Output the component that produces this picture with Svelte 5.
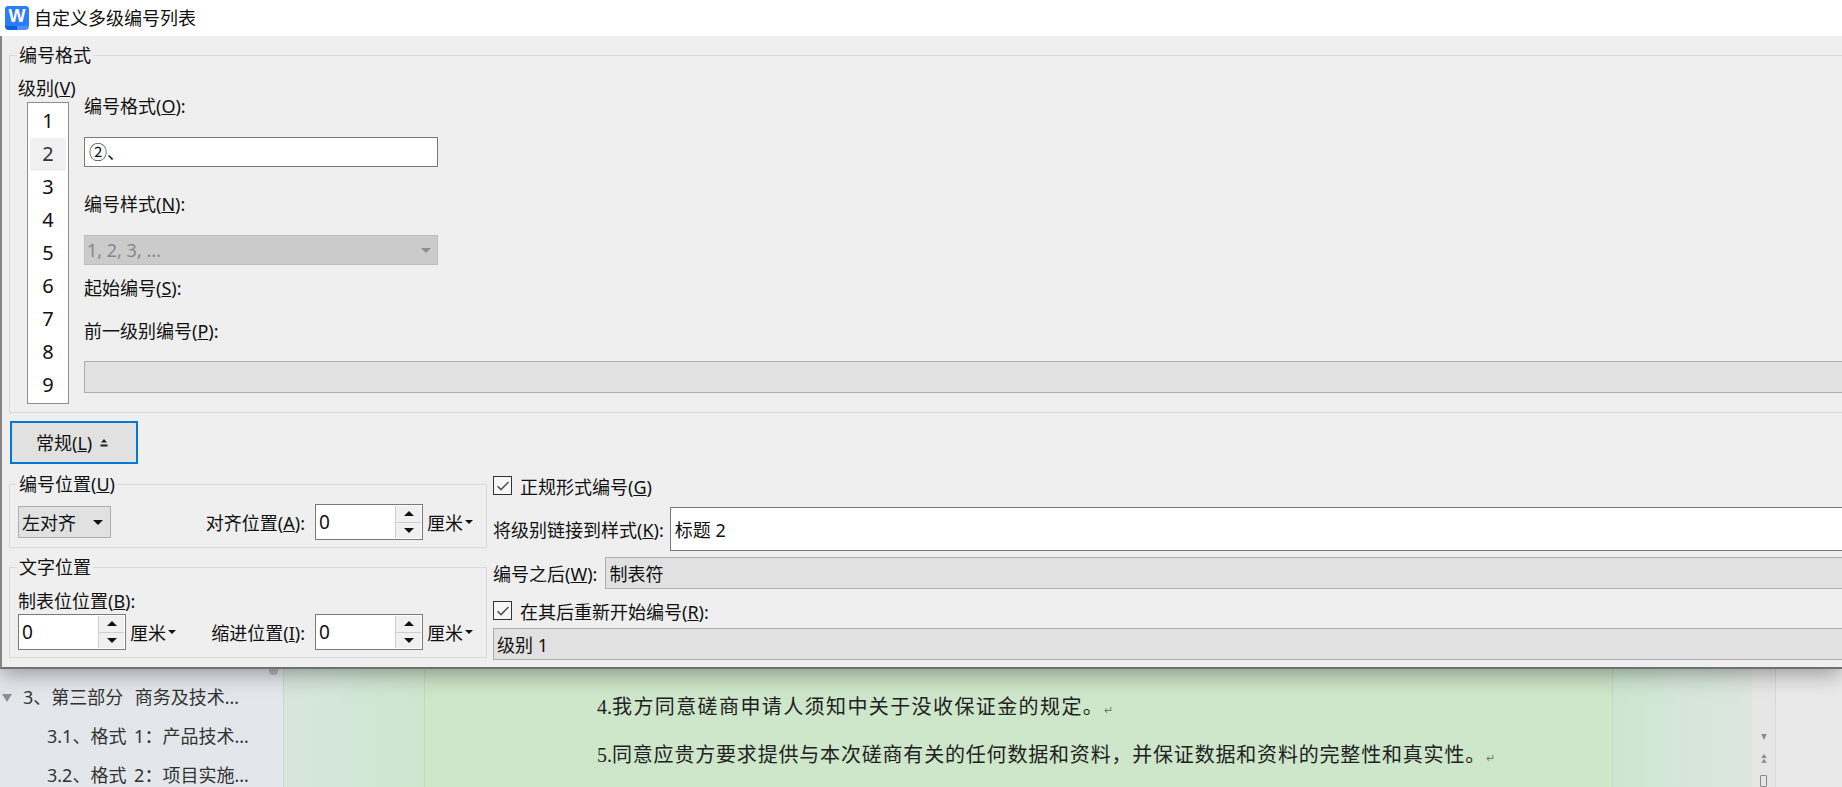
<script>
  const levels = [1, 2, 3, 4, 5, 6, 7, 8, 9];
</script>

{#snippet spinner()}
  <div class="spinner">
    <span class="spin-value">0</span>
    <div class="spin-btns">
      <div class="spin-btn"><i class="tri up"></i></div>
      <div class="spin-btn"><i class="tri down"></i></div>
    </div>
  </div>
  <span class="unit">厘米<i class="tri down small"></i></span>
{/snippet}

{#snippet check()}
  <span class="checkbox">
    <svg width="14" height="12" viewBox="0 0 14 12"><path d="M1.5 6.2 L5 9.6 L12.5 2" fill="none" stroke="#555" stroke-width="1.6" /></svg>
  </span>
{/snippet}

<div class="screen">
  <div class="dialog">
    <div class="titlebar">
      <div class="logo"><span>W</span></div>
      <span class="title">自定义多级编号列表</span>
    </div>

    <div class="body">
      <fieldset class="group format">
        <legend>编号格式</legend>
        <div class="format-cols">
          <div class="level-col">
            <div class="label">级别(<u>V</u>)</div>
            <div class="listbox">
              {#each levels as n}
                <div class="level" class:active={n === 2}>{n}</div>
              {/each}
            </div>
          </div>
          <div class="format-col">
            <div class="label">编号格式(<u>O</u>):</div>
            <div class="field format-input">②、</div>
            <div class="label style-label">编号样式(<u>N</u>):</div>
            <div class="field disabled">1, 2, 3, ...<i class="tri down gray"></i></div>
            <div class="label start-label">起始编号(<u>S</u>):</div>
            <div class="label prev-label">前一级别编号(<u>P</u>):</div>
            <div class="graybox prev-box"></div>
          </div>
        </div>
      </fieldset>

      <button class="general">
        <span>常规(<u>L</u>)</span>
        <svg width="8" height="8" viewBox="0 0 8 8"><path d="M4 0 L7 3.5 H1 Z M0.5 5.5 H7.5 V7.5 H0.5 Z" fill="#222" /></svg>
      </button>

      <div class="lower">
        <div class="lower-left">
          <fieldset class="group">
            <legend>编号位置(<u>U</u>)</legend>
            <div class="row num-row">
              <div class="align-select">左对齐<i class="tri down"></i></div>
              <span class="label row-label">对齐位置(<u>A</u>):</span>
              {@render spinner()}
            </div>
          </fieldset>
          <fieldset class="group text-pos">
            <legend>文字位置</legend>
            <div class="label tab-label">制表位位置(<u>B</u>):</div>
            <div class="row">
              {@render spinner()}
              <span class="label row-label">缩进位置(<u>I</u>):</span>
              {@render spinner()}
            </div>
          </fieldset>
        </div>

        <div class="lower-right">
          <div class="check-row first">{@render check()}<span class="label">正规形式编号(<u>G</u>)</span></div>
          <div class="link-row">
            <span class="label">将级别链接到样式(<u>K</u>):</span>
            <div class="field link-field">标题 2</div>
          </div>
          <div class="after-row">
            <span class="label">编号之后(<u>W</u>):</span>
            <div class="graybox">制表符</div>
          </div>
          <div class="check-row second">{@render check()}<span class="label">在其后重新开始编号(<u>R</u>):</span></div>
          <div class="graybox restart">级别 1</div>
        </div>
      </div>
    </div>
  </div>

  <div class="behind">
    <aside class="outline">
      <div class="thumb"></div>
      <div class="node top"><i class="tri down gray"></i>3、第三部分 &nbsp;商务及技术…</div>
      <div class="node">3.1、格式 1：产品技术…</div>
      <div class="node">3.2、格式 2：项目实施…</div>
    </aside>
    <div class="margin-left"></div>
    <main class="page">
      <p class="loose"><span class="num">4. </span>我方同意磋商申请人须知中关于没收保证金的规定。<span class="ret">↵</span></p>
      <p><span class="num">5. </span>同意应贵方要求提供与本次磋商有关的任何数据和资料，并保证数据和资料的完整性和真实性。<span class="ret">↵</span></p>
    </main>
    <div class="margin-right"></div>
    <div class="vscroll">
      <svg width="10" height="9" viewBox="0 0 10 9"><path d="M1 0 H9 L5 9 Z" fill="#8a8a8a" /></svg>
      <svg class="dbl" width="10" height="13" viewBox="0 0 10 13"><path d="M5 0 L9 6 H1 Z M5 7 L9 13 H1 Z" fill="#8a8a8a" /></svg>
      <span class="page-icon"></span>
    </div>
    <div class="rest"></div>
  </div>
</div>

<style>
  :global(body) { margin: 0; overflow: hidden; }
  .screen {
    width: 1842px; height: 787px; overflow: hidden;
    display: flex; flex-direction: column;
    font-family: "Noto Sans", "Noto Sans CJK SC", sans-serif;
    font-size: 18px; line-height: 24px; color: #111;
  }
  .dialog {
    position: relative; z-index: 2;
    height: 669px; flex: none;
    display: flex; flex-direction: column;
    box-shadow: 0 3px 22px rgba(0, 0, 0, 0.4);
  }
  .titlebar {
    height: 36px; flex: none; background: #fff;
    display: flex; align-items: center; gap: 5px; padding-left: 5px;
  }
  .logo {
    width: 24px; height: 24px; border-radius: 4px; overflow: hidden;
    background: linear-gradient(90deg, #0a5fe0 0 50%, #4e90f5 50%);
  }
  .logo span {
    display: block; height: 20px; text-align: center;
    background: #2b7cf7; border-radius: 0 0 2px 2px; color: #fff;
    font: bold 18px/20px "Liberation Sans", sans-serif;
  }
  .title { font-size: 18px; }

  .body {
    flex: 1; min-height: 0; background: #efefef;
    border-left: 2px solid #858585; border-bottom: 2px solid #707070;
    padding-top: 7px; overflow: hidden;
  }
  .group {
    margin: 0; padding: 0; min-width: 0;
    border: 1px solid #dadada;
  }
  .group legend {
    margin-left: 7px; padding: 0 2px; line-height: 24px; font-size: 18px;
  }
  .format { margin-left: 7px; border-right: none; padding-bottom: 8px; }
  .format-cols { display: flex; padding-top: 9px; }
  .level-col { width: 74px; flex: none; padding-left: 8px; box-sizing: border-box; }
  .label { white-space: nowrap; }
  .listbox {
    margin: 2px 0 0 9px; width: 42px; height: 302px; box-sizing: border-box;
    border: 1px solid #8a8e92; background: #fff; padding: 2px;
    text-align: center;
  }
  .level { height: 33px; line-height: 31px; font-size: 20px; }
  .level.active { background: #f0f0f0; color: #333; }

  .format-col { flex: 1; padding-top: 18px; min-width: 0; }
  .field {
    box-sizing: border-box; border: 1px solid #7a7a7a; background: #fff;
    height: 30px; line-height: 28px; padding-left: 4px;
    white-space: nowrap; position: relative;
  }
  .format-input { width: 354px; margin-top: 19px; }
  .style-label { margin-top: 25px; }
  .disabled {
    width: 354px; margin-top: 19px; background: #cbcbcb; border-color: #bdbdbd;
    color: #878787; padding-left: 2px;
  }
  .disabled .tri { position: absolute; right: 6px; top: 12px; }
  .start-label { margin-top: 11px; }
  .prev-label { margin-top: 19px; }
  .graybox {
    box-sizing: border-box; background: #e1e1e1; border: 1px solid #adadad; border-right: none;
    height: 32px; line-height: 32px; padding-left: 3px; flex: 1;
  }
  .prev-box { margin-top: 18px; }

  .general {
    display: flex; align-items: center; gap: 8px;
    width: 128px; height: 43px; margin: 8px 0 8px 8px; padding: 0 0 0 24px;
    box-sizing: border-box; border: 2px solid #0078d7; background: #e1e1e1;
    font: inherit; color: inherit;
  }

  .lower { display: flex; gap: 6px; margin-left: 7px; }
  .lower-left { width: 478px; flex: none; }
  .num-row { padding: 8px 11px 7px 8px; }
  .row { display: flex; align-items: center; padding-left: 8px; padding-right: 11px; }
  .text-pos { margin-top: 7px; padding-bottom: 7px; }
  .tab-label { padding: 10px 0 1px 8px; }
  .row-label { margin-left: auto; margin-right: 10px; padding-top: 2px; }
  .align-select {
    box-sizing: border-box; width: 93px; height: 32px; line-height: 32px; padding-left: 3px;
    background: #e1e1e1; border: 1px solid #adadad; position: relative;
  }
  .align-select .tri { position: absolute; right: 7px; top: 13px; }

  .spinner {
    box-sizing: border-box; width: 108px; height: 36px; flex: none;
    border: 1px solid #7a7a7a; background: #fff; display: flex;
  }
  .spin-value { flex: 1; line-height: 34px; padding-left: 3px; font-size: 19px; }
  .spin-btns {
    width: 26px; margin: 1px 1px 1px 0; display: flex; flex-direction: column; gap: 1px;
    background: #cfcfcf; border-left: 1px solid #cfcfcf; box-sizing: border-box;
  }
  .spin-btn { flex: 1; background: #f0f0f0; display: flex; align-items: center; justify-content: center; }
  .unit { margin-left: 4px; width: 48px; flex: none; white-space: nowrap; display: flex; align-items: center; gap: 2px; padding-top: 2px; }

  .tri { display: inline-block; width: 0; height: 0; border-left: 5px solid transparent; border-right: 5px solid transparent; }
  .tri.down { border-top: 5px solid #111; }
  .tri.up { border-bottom: 5px solid #111; }
  .tri.small { border-left-width: 4px; border-right-width: 4px; border-top-width: 4px; margin-top: -2px; }
  .tri.gray { border-top-color: #8f8f8f; }

  .lower-right { flex: 1; min-width: 0; }
  .lower-right .label { padding-top: 2px; }
  .check-row { display: flex; align-items: center; gap: 8px; height: 19px; }
  .check-row.first { margin-top: 4px; }
  .check-row.second { margin-top: 12px; }
  .checkbox {
    box-sizing: border-box; width: 19px; height: 19px; flex: none;
    border: 1px solid #333; background: #f7f7f7;
    display: flex; align-items: center; justify-content: center;
  }
  .link-row { display: flex; align-items: center; gap: 6px; margin-top: 12px; }
  .link-field { flex: 1; height: 44px; line-height: 44px; border-right: none; }
  .after-row { display: flex; align-items: center; gap: 8px; margin-top: 6px; }
  .restart { margin-top: 8px; flex: none; }

  .behind { flex: 1; min-height: 0; display: flex; }
  .outline {
    position: relative; width: 283px; flex: none; padding-top: 9px;
    background: #e3e7ec; border-right: 1px solid #d0d3d6;
    color: #333;
  }
  .thumb {
    position: absolute; left: 269px; top: -8px; width: 9px; height: 14px;
    border-radius: 4px; background: #b7bcc2;
  }
  .node { height: 39px; line-height: 39px; padding-left: 47px; white-space: nowrap; word-spacing: 3px; }
  .node.top { padding-left: 2px; display: flex; align-items: center; word-spacing: 1px; }
  .node.top .tri { border-left-width: 5px; border-right-width: 5px; border-top-width: 8px; margin-right: 11px; }
  .margin-left { width: 140px; flex: none; background: linear-gradient(90deg, #d6e6dd, #cee6cd); }
  .page {
    width: 1189px; flex: none; box-sizing: border-box; padding: 14px 0 0 172px;
    background: #cee6ca; border-left: 1px solid #c2d8bf; border-right: 1px solid #c2d8bf;
    font-size: 20px; letter-spacing: 0.81px; color: #222;
    white-space: nowrap;
  }
  .page p { margin: 0; height: 48px; line-height: 48px; }
  .page p.loose { letter-spacing: 1.4px; }
  .num { letter-spacing: 0; font-family: "Liberation Serif", serif; }
  .ret { font-size: 11px; letter-spacing: 0; color: #777; }
  .margin-right { width: 139px; flex: none; background: linear-gradient(90deg, #cde6d0, #dce6df); }
  .vscroll {
    width: 24px; flex: none; background: #e6e6e6; border-right: 1px solid #d9d9d9;
    display: flex; flex-direction: column; align-items: center; padding-top: 65px; box-sizing: border-box;
    overflow: hidden;
  }
  .dbl { margin-top: 14px; }
  .page-icon { width: 5px; height: 10px; border: 1px solid #8a8a8a; border-radius: 1px; flex: none; margin-top: 12px; }
  .rest { flex: 1; background: #e9e9e9; }
</style>
